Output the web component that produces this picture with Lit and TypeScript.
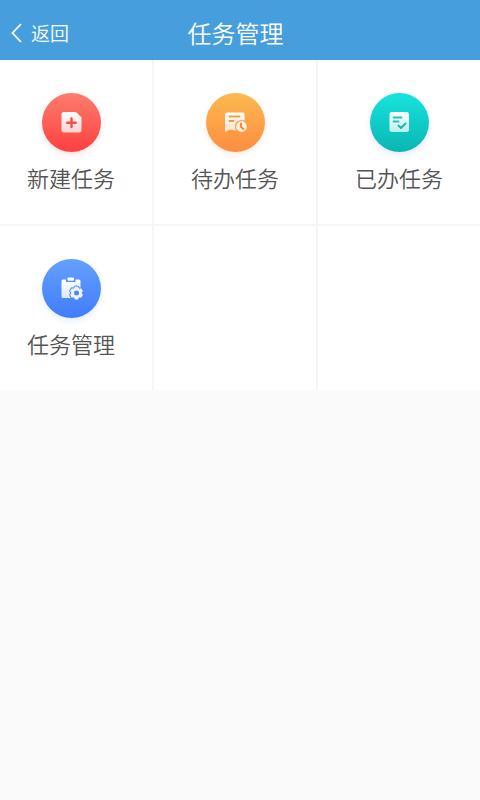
import { LitElement, html, css, svg } from "lit";
import { customElement } from "lit/decorators.js";

const gradient = (id: string, top: string, bottom: string) => svg`
  <linearGradient id=${id} x1="0" y1="0" x2="0" y2="1">
    <stop offset="0" stop-color=${top} />
    <stop offset="1" stop-color=${bottom} />
  </linearGradient>`;

const createIcon = svg`
  <defs>${gradient("create", "#ffffff", "#ffd3d0")}</defs>
  <path fill="url(#create)" d="M22 19H34L39.500 24.500V37a2.500 2.500 0 0 1-2.500 2.500H22a2.500 2.500 0 0 1-2.500-2.500V21.500a2.500 2.500 0 0 1 2.500-2.500Z" />
  <path fill="none" stroke="#f0504b" stroke-width="2.400" stroke-linecap="round" d="M29.500 25.500V34M25.200 29.700H33.800" />`;

const todoIcon = svg`
  <defs>${gradient("todo", "#ffffff", "#ffe1c4")}</defs>
  <path fill="url(#todo)" d="M21.500 19.500H36.500a2 2 0 0 1 2 2V38L34 36.500 29 37.500 24 36.500 19 39V22a2.500 2.500 0 0 1 2.500-2.500Z" />
  <path fill="none" stroke="#f79a3f" stroke-width="2" stroke-linecap="round" d="M23.500 23.500H33.500M23.500 28H27.500" />
  <circle cx="35.500" cy="33.500" r="6" fill="#fff0df" stroke="#fd9c41" stroke-width="1.200" />
  <path fill="none" stroke="#f58a3c" stroke-width="2" stroke-linecap="round" stroke-linejoin="round" d="M35 30.500V34L37.500 36" />`;

const doneIcon = svg`
  <defs>${gradient("done", "#ffffff", "#b9efec")}</defs>
  <rect x="19.500" y="19" width="19.500" height="20" rx="2.500" fill="url(#done)" />
  <path fill="none" stroke="#22c4c0" stroke-width="1.800" stroke-linecap="round" d="M23.500 24.500H31.500M23.500 28.500H28.500" />
  <path fill="none" stroke="#16b5b0" stroke-width="1.900" stroke-linecap="round" stroke-linejoin="round" d="M28.500 32.500L31 35L35.500 30.500" />`;

const manageIcon = svg`
  <defs>${gradient("manage", "#ffffff", "#dbe8ff")}</defs>
  <path fill="url(#manage)" d="M21 20.500H24V23H33.500V20.500H37a1.500 1.500 0 0 1 1.500 1.500V39H21a1.500 1.500 0 0 1-1.500-1.500V22A1.500 1.500 0 0 1 21 20.500Z" />
  <rect x="25.500" y="18.500" width="6.500" height="3.200" rx="1" fill="#ffffff" />
  <g stroke="#518bf8" stroke-width="2" fill="#518bf8">
    <circle cx="34.500" cy="34" r="5.400" />
    ${[0, 60, 120].map(
      (angle) => svg`<rect x="32.500" y="27.500" width="4" height="13" rx="1" transform="rotate(${angle} 34.500 34)" />`
    )}
  </g>
  <circle cx="34.500" cy="34" r="5.400" fill="#edf3ff" />
  ${[0, 60, 120].map(
    (angle) => svg`<rect x="32.500" y="27.500" width="4" height="13" rx="1" fill="#edf3ff" transform="rotate(${angle} 34.500 34)" />`
  )}
  <circle cx="34.500" cy="34" r="2.500" fill="#4f88f5" />`;

const tasks = [
  { label: "新建任务", tone: "red", icon: createIcon },
  { label: "待办任务", tone: "orange", icon: todoIcon },
  { label: "已办任务", tone: "teal", icon: doneIcon },
  { label: "任务管理", tone: "blue", icon: manageIcon },
];

@customElement("app-root")
export class AppRoot extends LitElement {
  static styles = css`
    :host {
      display: block;
      min-height: 100vh;
      overflow: hidden;
      background: #fafafa;
      color: #555;
      font-family: "Noto Sans CJK SC", sans-serif;
      font-weight: 350;
    }
    .bar {
      display: grid;
      grid-template-columns: 1fr auto 1fr;
      align-items: center;
      height: 60px;
      padding: 6px 9px 0 0;
      box-sizing: border-box;
      background: #479edd;
      color: #fff;
    }
    button {
      border: 0;
      padding: 0;
      background: none;
      color: inherit;
      font: inherit;
      cursor: pointer;
    }
    .back {
      display: flex;
      align-items: center;
      justify-self: start;
      gap: 8px;
      padding-left: 11px;
      font-size: 19px;
      line-height: 28px;
    }
    .title {
      margin: 0;
      font-size: 24px;
      font-weight: inherit;
      line-height: 36px;
    }
    .grid {
      display: grid;
      grid-template-columns: repeat(3, 1fr);
      margin: 0 -2px 0 -10px;
      background: #fff;
    }
    .cell {
      display: flex;
      justify-content: center;
      min-height: 164px;
      border-right: 2px solid #f5f5f7;
    }
    .cell:nth-child(-n + 3) {
      border-bottom: 2px solid #f5f5f7;
    }
    .task {
      display: flex;
      flex: 1;
      flex-direction: column;
      align-items: center;
      gap: 9px;
      padding-top: 33px;
      font-size: 22px;
      line-height: 32px;
    }
    .badge {
      width: 59px;
      height: 59px;
      border-radius: 50%;
    }
    .badge svg {
      display: block;
    }
    .red {
      background: linear-gradient(#fc7d6c, #fd403f);
      box-shadow: 0 3px 6px #fd403f24;
    }
    .orange {
      background: linear-gradient(#fbb951, #fe8d40);
      box-shadow: 0 3px 6px #fe8d4024;
    }
    .teal {
      background: linear-gradient(#16e4df, #0bb5b2);
      box-shadow: 0 3px 6px #4080ff24;
    }
    .blue {
      background: linear-gradient(#64a0fc, #417cfb);
      box-shadow: 0 3px 6px #417cfb24;
    }
  `;

  render() {
    return html`
      <header class="bar">
        <button class="back" type="button">
          <svg width="12" height="20" viewBox="0 0 12 20" fill="none" stroke="currentColor" stroke-width="1.800" aria-hidden="true">
            <path d="M10 1L1.500 10L10 19" />
          </svg>
          返回
        </button>
        <h1 class="title">任务管理</h1>
      </header>
      <main class="grid">
        ${tasks.map(
          (task) => html`
            <div class="cell">
              <button class="task" type="button">
                <span class="badge ${task.tone}">
                  <svg width="59" height="59" viewBox="0 0 59 59" aria-hidden="true">${task.icon}</svg>
                </span>
                <span>${task.label}</span>
              </button>
            </div>
          `
        )}
        <div class="cell"></div>
        <div class="cell"></div>
      </main>
    `;
  }
}
